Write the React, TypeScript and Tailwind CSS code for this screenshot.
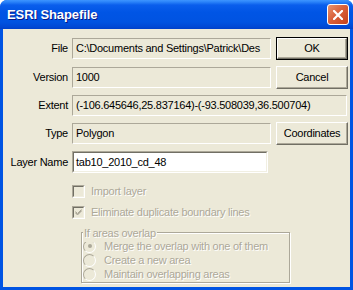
import React from 'react';

const disabledText = 'text-[#aca899] [text-shadow:1px_1px_0_#fff]';

const Field = ({ value, className = '' }: { value: string; className?: string }) => (
  <div
    className={`h-[21px] flex items-center px-[3px] overflow-hidden whitespace-nowrap border border-t-[#aca899] border-l-[#aca899] border-r-white border-b-white ${className}`}
  >
    {value}
  </div>
);

const Label = ({ children }: { children: React.ReactNode }) => (
  <div className="w-[69px] pr-[4px] text-right shrink-0">{children}</div>
);

const Button = ({ label, isDefault }: { label: string; isDefault?: boolean }) => (
  <div className={`w-[72px] h-[23px] shrink-0 ${isDefault ? 'border border-black' : ''}`}>
    <div className="h-full flex items-center justify-center border border-t-white border-l-white border-r-[#716f64] border-b-[#716f64] shadow-[inset_-1px_-1px_#aca899]">
      {label}
    </div>
  </div>
);

const Checkbox = ({ label, checked }: { label: string; checked?: boolean }) => (
  <div className="flex items-center h-[16px] pl-[69px]">
    <div className="w-[13px] h-[13px] border border-t-[#aca899] border-l-[#aca899] border-r-white border-b-white">
      <div className="w-full h-full border border-t-[#716f64] border-l-[#716f64] border-r-[#f1efe2] border-b-[#f1efe2] flex items-center justify-center">
        {checked && (
          <svg width="7" height="7" viewBox="0 0 7 7">
            <path d="M0.5 2.5 L2.5 4.5 L6.5 0.5 M0.5 3.5 L2.5 5.5 L6.5 1.5 M0.5 4 L2.5 6 L6.5 2" stroke="#aca899" strokeWidth="1" fill="none" />
          </svg>
        )}
      </div>
    </div>
    <span className={`ml-[6px] ${disabledText}`}>{label}</span>
  </div>
);

const Radio = ({ label, checked }: { label: string; checked?: boolean }) => (
  <div className="flex items-center h-[14px]">
    <div className="w-[13px] h-[13px] rounded-full border border-t-[#aca899] border-l-[#aca899] border-r-white border-b-white flex items-center justify-center">
      {checked && <div className="w-[4px] h-[4px] rounded-full bg-[#aca899]" />}
    </div>
    <span className={`ml-[8px] ${disabledText}`}>{label}</span>
  </div>
);

export default function App() {
  return (
    <div className="w-[353px] h-[290px] bg-white font-['Liberation_Sans',Arial,sans-serif] text-[11px] tracking-[-0.25px] text-black">
      <div className="w-full h-full flex flex-col rounded-t-[7px] overflow-hidden bg-[#0054e3]">
        {/* title bar */}
        <div className="h-[29px] shrink-0 flex items-center pl-[7px] pr-[4px] bg-[linear-gradient(to_bottom,#3d95ff_0px,#2a83f9_2px,#0a5eec_5px,#0055e5_12px,#0053e1_22px,#0048d4_27px,#003fc8_29px)]">
          <span className="flex-1 text-white font-bold text-[13px] tracking-[-0.1px] [text-shadow:1px_1px_0_#0a1883]">
            ESRI Shapefile
          </span>
          <div className="w-[22px] h-[21px] rounded-[3px] border border-white bg-[linear-gradient(135deg,#e8946f_0%,#d9613b_45%,#c4401b_100%)] flex items-center justify-center">
            <svg width="10" height="10" viewBox="0 0 10 10">
              <path d="M1 1 L9 9 M9 1 L1 9" stroke="#fff" strokeWidth="2.2" strokeLinecap="square" />
            </svg>
          </div>
        </div>
        {/* client area */}
        <div className="flex-1 mx-[3px] mb-[3px] bg-[#ece9d8] flex flex-col pt-[7px]">
          <div className="flex items-center h-[24px]">
            <Label>File</Label>
            <Field value="C:\Documents and Settings\Patrick\Des" className="w-[199px]" />
            <div className="ml-[5px]">
              <Button label="OK" isDefault />
            </div>
          </div>
          <div className="flex items-center h-[24px] mt-[5px]">
            <Label>Version</Label>
            <Field value="1000" className="w-[199px]" />
            <div className="ml-[5px]">
              <Button label="Cancel" />
            </div>
          </div>
          <div className="flex items-center h-[24px] mt-[4px]">
            <Label>Extent</Label>
            <Field value="(-106.645646,25.837164)-(-93.508039,36.500704)" className="w-[275px]" />
          </div>
          <div className="flex items-center h-[24px] mt-[4px]">
            <Label>Type</Label>
            <Field value="Polygon" className="w-[199px]" />
            <div className="ml-[5px]">
              <Button label="Coordinates" />
            </div>
          </div>
          <div className="flex items-center h-[24px] mt-[5px]">
            <Label>Layer Name</Label>
            <div className="w-[196px] h-[22px] bg-white border border-t-[#aca899] border-l-[#aca899] border-r-white border-b-white">
              <div className="h-full flex items-center px-[2px] border border-t-[#716f64] border-l-[#716f64] border-r-[#f1efe2] border-b-[#f1efe2]">
                tab10_2010_cd_48
              </div>
            </div>
          </div>
          <div className="mt-[9px]">
            <Checkbox label="Import layer" />
          </div>
          <div className="mt-[5px]">
            <Checkbox label="Eliminate duplicate boundary lines" checked />
          </div>
          <div className="ml-[78px] mt-[12px] w-[209px] h-[51px] relative border border-[#aca899] shadow-[inset_1px_1px_#fff,1px_1px_#fff] pl-[1px] pt-[6px]">
            <span className={`absolute -top-[8px] left-[1px] px-[1px] bg-[#ece9d8] ${disabledText}`}>If areas overlap</span>
            <Radio label="Merge the overlap with one of them" checked />
            <Radio label="Create a new area" />
            <Radio label="Maintain overlapping areas" />
          </div>
        </div>
      </div>
    </div>
  );
}
